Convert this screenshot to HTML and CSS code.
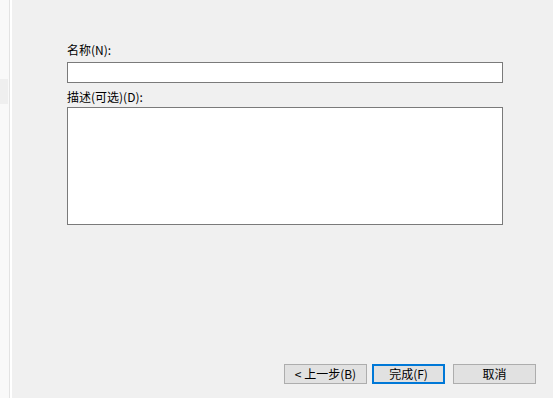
FILE: index.html
```html
<!DOCTYPE html>
<html lang="zh-CN">
  <head>
    <meta charset="UTF-8" />
    <meta name="viewport" content="width=device-width, initial-scale=1.0" />
    <title>新建</title>
    <link rel="stylesheet" href="styles.css">
  </head>
  <body>
    <div class="window">
      <!-- left nav strip -->
      <div class="side">
        <div class="side-item"></div>
      </div>
      <div class="divider"></div>

      <div class="main">
        <div class="form">
          <label class="field-label" for="name">名称(N):</label>
          <input id="name" class="text-input" type="text" />

          <label class="field-label second" for="desc">描述(可选)(D):</label>
          <textarea id="desc" class="text-area"></textarea>
        </div>

        <div class="buttons">
          <button class="btn btn-back">&lt; 上一步(B)</button>
          <button class="btn btn-finish">完成(F)</button>
          <button class="btn btn-cancel">取消</button>
        </div>
      </div>
    </div>
  </body>
</html>
```

FILE: styles.css
```css
body {
  margin: 0;
  padding: 0;
  font-family: "Noto Sans CJK SC", "Liberation Sans", sans-serif;
  font-size: 12px;
  color: #000;
  background-color: #f0f0f0;
  overflow: hidden;
}
.window {
  display: flex;
  height: 398px;
}
.side {
  width: 9px;
  background-color: #f9f9f9;
  padding-top: 79px;
}
.side-item {
  width: 8px;
  height: 25px;
  background-color: #efefef;
}
.divider {
  width: 2px;
  border-left: 1px solid #e3e3e3;
  background-color: #ffffff;
}
.main {
  flex: 1;
  display: flex;
  flex-direction: column;
  justify-content: space-between;
  padding: 42px 17px 14px 55px;
  background-color: #f0f0f0;
}
.form {
  display: flex;
  flex-direction: column;
  width: 436px;
}
.field-label {
  line-height: 16px;
  height: 16px;
  margin-bottom: 4px;
}
.field-label.second {
  margin-top: 6px;
  margin-bottom: 2px;
}
.text-input,
.text-area {
  box-sizing: border-box;
  width: 436px;
  margin: 0;
  border: 1px solid #7a7a7a;
  background: #ffffff;
  font-family: inherit;
  font-size: 12px;
  outline: none;
  resize: none;
}
.text-input {
  height: 21px;
  padding: 0 3px;
}
.text-area {
  height: 118px;
  padding: 2px 3px;
}
.buttons {
  display: flex;
  justify-content: flex-end;
  align-items: center;
}
.btn {
  box-sizing: border-box;
  height: 20px;
  margin: 0;
  padding: 0;
  border: 1px solid #adadad;
  background-color: #e1e1e1;
  font-family: inherit;
  font-size: 12px;
  line-height: 16px;
  color: #000;
}
.btn-back {
  width: 83px;
}
.btn-finish {
  width: 73px;
  margin-left: 5px;
  border: 2px solid #0078d7;
}
.btn-cancel {
  width: 83px;
  margin-left: 8px;
}
```
